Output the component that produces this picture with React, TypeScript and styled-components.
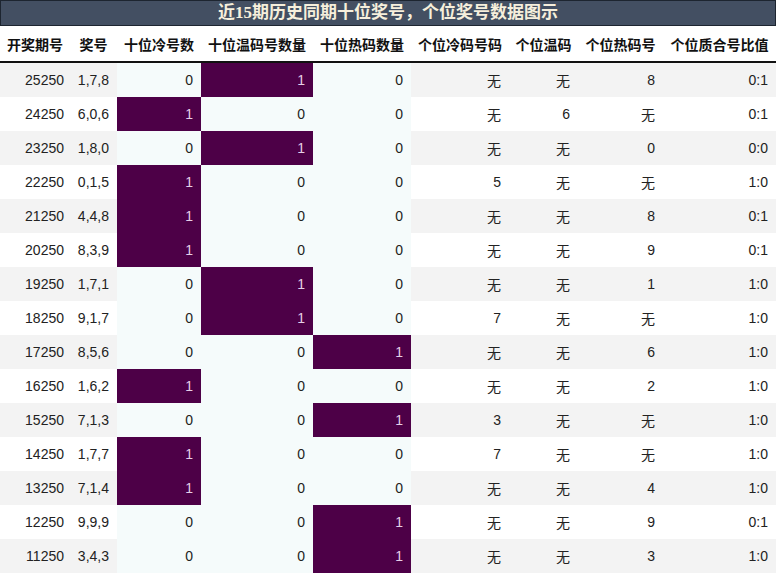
import React from "react";
import styled, { createGlobalStyle } from "styled-components";

const GlobalStyle = createGlobalStyle`
  body {
    margin: 0;
    background: #ffffff;
    font-family: "Liberation Sans", "Noto Sans CJK SC", sans-serif;
  }
`;

const Wrap = styled.div`
  width: 776px;
  height: 574px;
  overflow: hidden;
`;

const Title = styled.div`
  height: 24px;
  border: 1px solid #1d2530;
  background: #434f62;
  color: #f6efdc;
  font-family: "Liberation Serif", "Noto Sans CJK SC", serif;
  font-weight: bold;
  font-size: 17px;
  line-height: 24px;
  text-align: center;
`;

const Grid = styled.div`
  display: grid;
  grid-template-columns: 70px 47px 84px 112px 98px 98px 69px 85px 113px;
`;

const HeadCell = styled.div`
  height: 35px;
  border-bottom: 2px solid #111;
  display: flex;
  align-items: center;
  justify-content: center;
  font-weight: bold;
  font-size: 14px;
  color: #111;
  white-space: nowrap;
`;

const Cell = styled.div<{ $bg: string; $hot?: boolean; $pad?: number }>`
  height: 34px;
  display: flex;
  align-items: center;
  justify-content: flex-end;
  padding-right: ${(p) => p.$pad ?? 8}px;
  box-sizing: border-box;
  font-size: 14px;
  background: ${(p) => (p.$hot ? "#4d0047" : p.$bg)};
  color: ${(p) => (p.$hot ? "#e6cfe8" : "#222")};
`;

const heads = ["开奖期号", "奖号", "十位冷号数", "十位温码号数量", "十位热码数量", "个位冷码号码", "个位温码", "个位热码号", "个位质合号比值"];

const rows: [string, string, number, number, number, string, string, string, string][] = [
  ["25250", "1,7,8", 0, 1, 0, "无", "无", "8", "0:1"],
  ["24250", "6,0,6", 1, 0, 0, "无", "6", "无", "0:1"],
  ["23250", "1,8,0", 0, 1, 0, "无", "无", "0", "0:0"],
  ["22250", "0,1,5", 1, 0, 0, "5", "无", "无", "1:0"],
  ["21250", "4,4,8", 1, 0, 0, "无", "无", "8", "0:1"],
  ["20250", "8,3,9", 1, 0, 0, "无", "无", "9", "0:1"],
  ["19250", "1,7,1", 0, 1, 0, "无", "无", "1", "1:0"],
  ["18250", "9,1,7", 0, 1, 0, "7", "无", "无", "1:0"],
  ["17250", "8,5,6", 0, 0, 1, "无", "无", "6", "1:0"],
  ["16250", "1,6,2", 1, 0, 0, "无", "无", "2", "1:0"],
  ["15250", "7,1,3", 0, 0, 1, "3", "无", "无", "1:0"],
  ["14250", "1,7,7", 1, 0, 0, "7", "无", "无", "1:0"],
  ["13250", "7,1,4", 1, 0, 0, "无", "无", "4", "1:0"],
  ["12250", "9,9,9", 0, 0, 1, "无", "无", "9", "0:1"],
  ["11250", "3,4,3", 0, 0, 1, "无", "无", "3", "1:0"],
];

const SHADE = "#f3f3f3";
const PLAIN = "#ffffff";
const TEN = "#f5fbfb";

export default function App() {
  return (
    <Wrap>
      <GlobalStyle />
      <Title>近15期历史同期十位奖号，个位奖号数据图示</Title>
      <Grid>
        {heads.map((h) => (
          <HeadCell key={h}>{h}</HeadCell>
        ))}
        {rows.map((r, i) => {
          const bg = i % 2 === 0 ? SHADE : PLAIN;
          return (
            <React.Fragment key={r[0]}>
              <Cell $bg={bg} $pad={6}>{r[0]}</Cell>
              <Cell $bg={bg}>{r[1]}</Cell>
              <Cell $bg={TEN} $hot={r[2] === 1}>{r[2]}</Cell>
              <Cell $bg={TEN} $hot={r[3] === 1}>{r[3]}</Cell>
              <Cell $bg={TEN} $hot={r[4] === 1}>{r[4]}</Cell>
              <Cell $bg={bg}>{r[5]}</Cell>
              <Cell $bg={bg}>{r[6]}</Cell>
              <Cell $bg={bg}>{r[7]}</Cell>
              <Cell $bg={bg}>{r[8]}</Cell>
            </React.Fragment>
          );
        })}
      </Grid>
    </Wrap>
  );
}
